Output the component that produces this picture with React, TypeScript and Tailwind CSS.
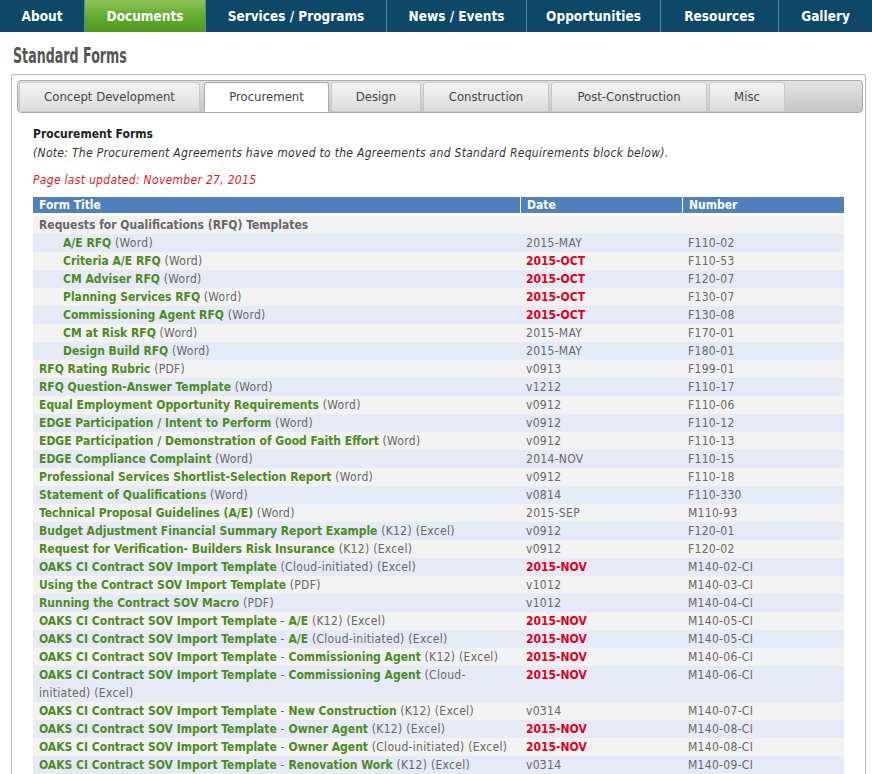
import React from 'react';

type Row = {
  cat?: boolean;
  indent?: boolean;
  title: string;
  sub?: string;
  suffix?: string;
  date?: string;
  red?: boolean;
  num?: string;
  wrap?: [string, string];
};

const OAKS = 'OAKS CI Contract SOV Import Template';

const rows: Row[] = [
  { cat: true, title: 'Requests for Qualifications (RFQ) Templates' },
  { indent: true, title: 'A/E RFQ', suffix: '(Word)', date: '2015-MAY', num: 'F110-02' },
  { indent: true, title: 'Criteria A/E RFQ', suffix: '(Word)', date: '2015-OCT', red: true, num: 'F110-53' },
  { indent: true, title: 'CM Adviser RFQ', suffix: '(Word)', date: '2015-OCT', red: true, num: 'F120-07' },
  { indent: true, title: 'Planning Services RFQ', suffix: '(Word)', date: '2015-OCT', red: true, num: 'F130-07' },
  { indent: true, title: 'Commissioning Agent RFQ', suffix: '(Word)', date: '2015-OCT', red: true, num: 'F130-08' },
  { indent: true, title: 'CM at Risk RFQ', suffix: '(Word)', date: '2015-MAY', num: 'F170-01' },
  { indent: true, title: 'Design Build RFQ', suffix: '(Word)', date: '2015-MAY', num: 'F180-01' },
  { title: 'RFQ Rating Rubric', suffix: '(PDF)', date: 'v0913', num: 'F199-01' },
  { title: 'RFQ Question-Answer Template', suffix: '(Word)', date: 'v1212', num: 'F110-17' },
  { title: 'Equal Employment Opportunity Requirements', suffix: '(Word)', date: 'v0912', num: 'F110-06' },
  { title: 'EDGE Participation / Intent to Perform', suffix: '(Word)', date: 'v0912', num: 'F110-12' },
  { title: 'EDGE Participation / Demonstration of Good Faith Effort', suffix: '(Word)', date: 'v0912', num: 'F110-13' },
  { title: 'EDGE Compliance Complaint', suffix: '(Word)', date: '2014-NOV', num: 'F110-15' },
  { title: 'Professional Services Shortlist-Selection Report', suffix: '(Word)', date: 'v0912', num: 'F110-18' },
  { title: 'Statement of Qualifications', suffix: '(Word)', date: 'v0814', num: 'F110-330' },
  { title: 'Technical Proposal Guidelines (A/E)', suffix: '(Word)', date: '2015-SEP', num: 'M110-93' },
  { title: 'Budget Adjustment Financial Summary Report Example', suffix: '(K12) (Excel)', date: 'v0912', num: 'F120-01' },
  { title: 'Request for Verification- Builders Risk Insurance', suffix: '(K12) (Excel)', date: 'v0912', num: 'F120-02' },
  { title: OAKS, suffix: '(Cloud-initiated) (Excel)', date: '2015-NOV', red: true, num: 'M140-02-CI' },
  { title: 'Using the Contract SOV Import Template', suffix: '(PDF)', date: 'v1012', num: 'M140-03-CI' },
  { title: 'Running the Contract SOV Macro', suffix: '(PDF)', date: 'v1012', num: 'M140-04-CI' },
  { title: OAKS, sub: 'A/E', suffix: '(K12) (Excel)', date: '2015-NOV', red: true, num: 'M140-05-CI' },
  { title: OAKS, sub: 'A/E', suffix: '(Cloud-initiated) (Excel)', date: '2015-NOV', red: true, num: 'M140-05-CI' },
  { title: OAKS, sub: 'Commissioning Agent', suffix: '(K12) (Excel)', date: '2015-NOV', red: true, num: 'M140-06-CI' },
  { title: OAKS, sub: 'Commissioning Agent', wrap: ['(Cloud-', 'initiated) (Excel)'], date: '2015-NOV', red: true, num: 'M140-06-CI' },
  { title: OAKS, sub: 'New Construction', suffix: '(K12) (Excel)', date: 'v0314', num: 'M140-07-CI' },
  { title: OAKS, sub: 'Owner Agent', suffix: '(K12) (Excel)', date: '2015-NOV', red: true, num: 'M140-08-CI' },
  { title: OAKS, sub: 'Owner Agent', suffix: '(Cloud-initiated) (Excel)', date: '2015-NOV', red: true, num: 'M140-08-CI' },
  { title: OAKS, sub: 'Renovation Work', suffix: '(K12) (Excel)', date: 'v0314', num: 'M140-09-CI' },
];

const nav = [
  { label: 'About', w: 'w-[84px]' },
  { label: 'Documents', w: 'w-[121px]', active: true },
  { label: 'Services / Programs', w: 'w-[181px]' },
  { label: 'News / Events', w: 'w-[140px]' },
  { label: 'Opportunities', w: 'w-[134px]' },
  { label: 'Resources', w: 'w-[118px]' },
  { label: 'Gallery', w: 'flex-1' },
];

const tabs = [
  { label: 'Concept Development', w: 'w-[181px]' },
  { label: 'Procurement', w: 'w-[125px] ml-[2px]', active: true },
  { label: 'Design', w: 'w-[90px]' },
  { label: 'Construction', w: 'w-[126px]' },
  { label: 'Post-Construction', w: 'w-[156px]' },
  { label: 'Misc', w: 'w-[76px]' },
];

const body = "font-['DejaVu_Sans_Condensed','DejaVu_Sans',sans-serif]";

export default function App() {
  return (
    <div className={`w-[872px] bg-white ${body} text-[12px] tracking-[0.3px] text-[#333]`}>
      {/* top navigation */}
      <nav className="flex h-[32px] bg-[#0d4868] tracking-normal">
        {nav.map((n, i) => (
          <div
            key={n.label}
            className={`${n.w} flex items-center justify-center text-[13.5px] font-bold text-white ${
              i > 0 ? 'border-l border-[#5b8aa4]' : ''
            } ${n.active ? 'bg-gradient-to-b from-[#8cc557] via-[#63ab2e] to-[#4e9a1c]' : ''}`}
          >
            {n.label}
          </div>
        ))}
      </nav>

      <h1 className="pl-[13px] pt-[11px] h-[42px] text-[22px] font-bold text-[#555] leading-[26px] tracking-normal">
        <span className="inline-block origin-left scale-x-[0.64]">Standard Forms</span>
      </h1>

      <div className="mx-[11px] w-[855px] border border-[#b9b9b9] border-b-0 rounded-t-[3px] pl-[5px] pr-[2px] pt-[5px]">
        {/* tab strip */}
        <div className="flex gap-[2px] h-[33px] pt-[1px] pl-[1px] rounded-[4px] border border-[#aaa] bg-gradient-to-b from-[#e3e3e3] to-[#c6c6c6] tracking-normal">
          {tabs.map((t) => (
            <div
              key={t.label}
              className={`${t.w} h-[30px] flex items-center justify-center text-[13px] text-[#444] border rounded-t-[3px] ${
                t.active
                  ? 'bg-white border-[#aaa] border-b-white'
                  : 'bg-gradient-to-b from-[#f3f3f3] to-[#dcdcdc] border-[#c8c8c8]'
              }`}
            >
              {t.label}
            </div>
          ))}
        </div>

        <div className="pl-[16px] pr-[19px] pt-[12px]">
          <div className="font-bold text-[#222] leading-[18px] tracking-normal">Procurement Forms</div>
          <div className="italic text-[#333] leading-[20px]">
            (Note: The Procurement Agreements have moved to the Agreements and Standard Requirements block below).
          </div>
          <div className="italic text-[#e3151c] leading-[20px] mt-[7px]">Page last updated: November 27, 2015</div>

          {/* forms table */}
          <div className="mt-[7px] w-[811px]">
            <div className="flex h-[16px] bg-[#4f80bd] text-white font-bold leading-[16px] tracking-normal">
              <div className="w-[487px] pl-[6px]">Form Title</div>
              <div className="w-[162px] pl-[6px] border-l border-white">Date</div>
              <div className="flex-1 pl-[6px] border-l border-white">Number</div>
            </div>
            <div className="mt-[3px]">
              {rows.map((r, i) => (
                <div
                  key={i}
                  className={`flex leading-[18px] ${i % 2 === 0 ? 'bg-[#f2f2f2]' : 'bg-[#e6eaf6]'}`}
                >
                  <div className={`w-[487px] pr-[4px] ${r.indent ? 'pl-[30px]' : 'pl-[6px]'}`}>
                    {r.cat ? (
                      <span className="font-bold text-[#666] tracking-normal">{r.title}</span>
                    ) : (
                      <>
                        <span className="font-bold text-[#4b8a1e] tracking-normal">{r.title}</span>
                        {r.sub && (
                          <>
                            <span className="text-[#666]"> - </span>
                            <span className="font-bold text-[#4b8a1e] tracking-normal">{r.sub}</span>
                          </>
                        )}
                        {r.suffix && <span className="text-[#666]"> {r.suffix}</span>}
                        {r.wrap && (
                          <span className="text-[#666]">
                            {' '}
                            {r.wrap[0]}
                            <br />
                            {r.wrap[1]}
                          </span>
                        )}
                      </>
                    )}
                  </div>
                  <div
                    className={`w-[162px] pl-[6px] ${
                      r.red ? 'font-bold text-[#e0001b] tracking-normal' : 'text-[#666]'
                    }`}
                  >
                    {r.date}
                  </div>
                  <div className="flex-1 pl-[6px] text-[#666]">{r.num}</div>
                </div>
              ))}
            </div>
          </div>
        </div>
      </div>
      <div className="h-[20px] bg-gradient-to-b from-[#2a5f8f] to-[#123f68]" />
    </div>
  );
}
